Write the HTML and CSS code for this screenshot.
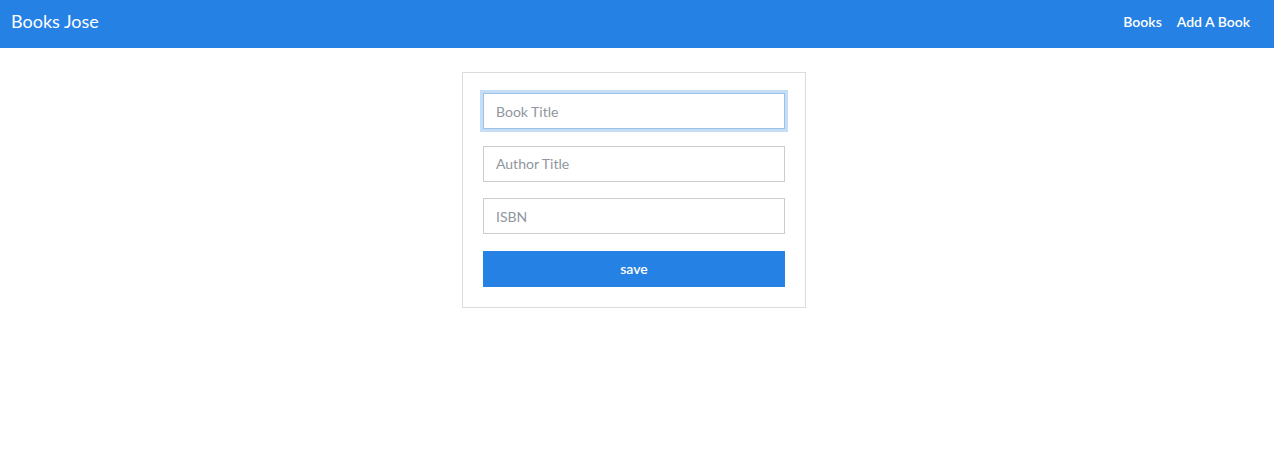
FILE: index.html
```html
<!DOCTYPE html>
<html>
<head>
<meta charset="utf-8">
<link rel="stylesheet" href="styles.css">
</head>
<body>
<nav class="navbar">
  <a class="brand" href="#">Books Jose</a>
  <div class="links">
    <a href="#">Books</a>
    <a href="#">Add A Book</a>
  </div>
</nav>
<main class="main">
  <form class="card">
    <input class="field focused" type="text" placeholder="Book Title">
    <input class="field" type="text" placeholder="Author Title">
    <input class="field" type="text" placeholder="ISBN">
    <button class="save" type="button">save</button>
  </form>
</main>
</body>
</html>
```
FILE: styles.css
```css
* { box-sizing: border-box; }
body {
  margin: 0;
  font-family: "Lato", "Noto Sans", sans-serif;
  background: #fff;
}
.navbar {
  height: 48px;
  background: #2581e3;
  display: flex;
  align-items: center;
  justify-content: space-between;
  padding: 0 24px 6px 11px;
}
.brand {
  color: #fff;
  text-decoration: none;
  font-size: 18px;
}
.links {
  display: flex;
  gap: 15px;
}
.links a {
  color: #fff;
  text-decoration: none;
  font-size: 14px;
  font-weight: 600;
}
.main {
  display: flex;
  justify-content: center;
  padding: 24px 6px 0 0;
}
.card {
  width: 344px;
  border: 1px solid #dcdcdc;
  padding: 20px;
  display: flex;
  flex-direction: column;
  gap: 16.67px;
}
.field {
  height: 36px;
  border: 1px solid #ccc;
  padding: 0 12px;
  font-family: inherit;
  font-size: 14px;
  color: #555;
  outline: none;
}
.field::placeholder { color: #8f969e; }
.focused {
  border-color: #9cc2ea;
  box-shadow: 0 0 0 3px #c6ddf6;
}
.save {
  height: 36px;
  border: none;
  background: #2581e3;
  color: #fff;
  font-family: inherit;
  font-size: 14px;
  font-weight: 600;
}
```
